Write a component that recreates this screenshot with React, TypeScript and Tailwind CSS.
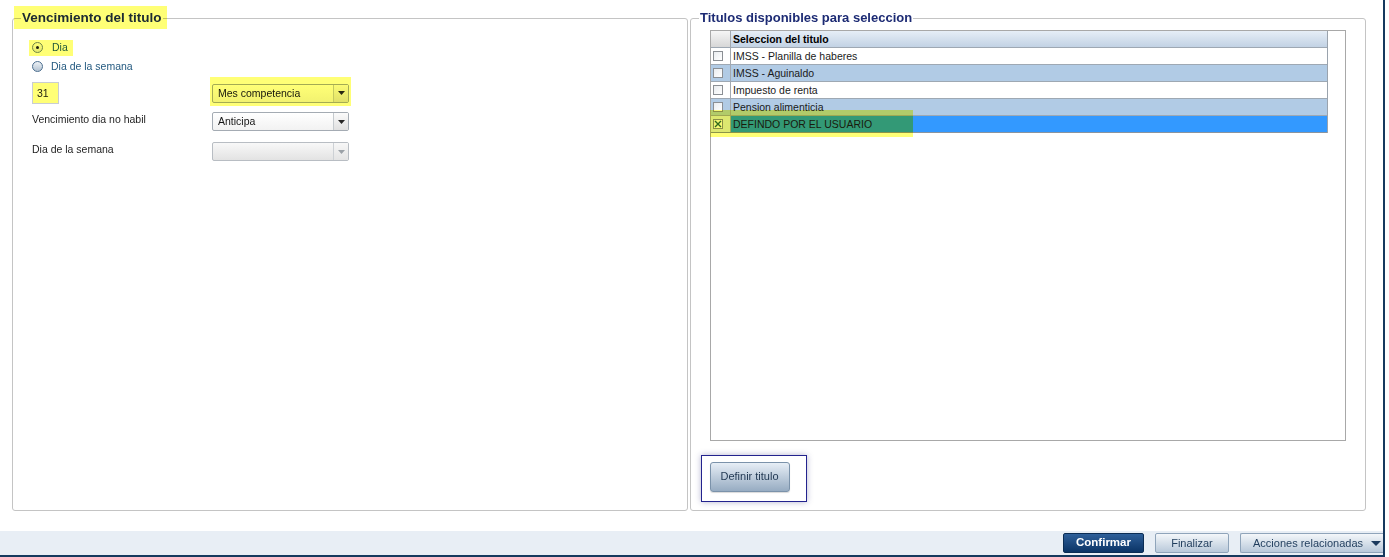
import clsx from "clsx";

// yellow marker used by the screenshot annotations
function Mark({ className }: { className?: string }) {
  return (
    <span
      className={clsx(
        "pointer-events-none absolute bg-[#ffff76] mix-blend-multiply",
        className
      )}
    />
  );
}

function Radio({ checked }: { checked?: boolean }) {
  if (checked) {
    return (
      <span className="flex h-[11px] w-[11px] shrink-0 items-center justify-center rounded-full border border-[#6f8597] bg-linear-to-b from-white to-[#e4e9ee]">
        <span className="h-[3px] w-[3px] rounded-full bg-[#1d1d1d]" />
      </span>
    );
  }
  return (
    <span className="h-[11px] w-[11px] shrink-0 rounded-full border border-[#4d6f8f] bg-linear-to-b from-[#eef2f6] to-[#b4c3d2]" />
  );
}

function Select({ value, disabled }: { value?: string; disabled?: boolean }) {
  return (
    <div
      className={clsx(
        "flex h-[19px] w-[137px] rounded-[2px] border",
        disabled
          ? "border-[#b8bdc3] bg-linear-to-b from-[#f8f8f8] to-[#e3e3e3]"
          : "border-[#a4abb3] bg-linear-to-b from-white to-[#f2f2f2]"
      )}
    >
      <div className="flex-1 pl-[5px] text-[10.5px] leading-[17px] text-[#151515]">
        {value}
      </div>
      <div
        className={clsx(
          "flex w-[15px] items-center justify-center border-l bg-linear-to-b",
          disabled
            ? "border-[#cdd1d5] from-[#f7f7f7] to-[#e4e4e4]"
            : "border-[#c5cace] from-[#fbfbfb] to-[#e0e0e0]"
        )}
      >
        <svg width="7" height="4" viewBox="0 0 7 4">
          <path d="M0 0h7L3.5 4z" fill={disabled ? "#9ba1a7" : "#262626"} />
        </svg>
      </div>
    </div>
  );
}

function Check({ checked }: { checked?: boolean }) {
  return (
    <span className="flex h-[10px] w-[10px] items-center justify-center border border-[#8b8f94] bg-linear-to-br from-[#e9ecef] to-white">
      {checked && (
        <svg width="8" height="8" viewBox="0 0 8 8">
          <path d="M1 1l6 6M7 1L1 7" stroke="#2f6b3a" strokeWidth="1.4" />
        </svg>
      )}
    </span>
  );
}

const rows = [
  { label: "IMSS - Planilla de haberes", tone: "white" },
  { label: "IMSS - Aguinaldo", tone: "blue" },
  { label: "Impuesto de renta", tone: "white" },
  { label: "Pension alimenticia", tone: "blue" },
  { label: "DEFINDO POR EL USUARIO", tone: "sel", checked: true },
];

export default function App() {
  return (
    <div className="flex h-[557px] w-[1385px] flex-col border-r-2 border-b-2 border-[#15395e] bg-white font-['Liberation_Sans',Arial,sans-serif] text-[#1b1b1b]">
      <div className="flex flex-1 gap-[2px] pt-[10px] pl-[12px]">
        {/* Vencimiento del titulo */}
        <fieldset className="h-[501px] w-[676px] rounded-[3px] border border-[#c4c4c4]">
          <legend className="relative ml-[8px] px-[1px] text-[13.5px] leading-[16px] font-bold text-[#1d2b6c]">
            Vencimiento del titulo
            <Mark className="-top-[4px] -right-[4px] -bottom-[3px] -left-[7px]" />
          </legend>
          <div className="pt-[12px] pl-[19px] text-[10.5px]">
            <div className="flex h-[19px] items-center">
              <span className="relative flex items-center">
                <Mark className="top-0 -left-[3px] h-[16px] w-[44px]" />
                <Radio checked />
                <span className="ml-[9px] leading-[15px] text-[#245a80]">Dia</span>
              </span>
            </div>
            <div className="flex h-[19px] items-center">
              <Radio />
              <span className="ml-[8px] leading-[15px] text-[#245a80]">
                Dia de la semana
              </span>
            </div>

            <div className="mt-[6px] flex h-[22px] items-center">
              <div className="w-[180px]">
                <div className="relative h-[22px] w-[27px] border border-[#c9cdd2] pl-[4px] leading-[20px] text-[#222]">
                  31
                  <Mark className="inset-0" />
                </div>
              </div>
              <div className="relative">
                <Select value="Mes competencia" />
                <Mark className="-top-[7px] -right-[2px] -bottom-[3px] -left-[2px]" />
              </div>
            </div>

            <div className="mt-[8px] flex h-[19px]">
              <div className="w-[180px] self-start leading-[14px] text-[#1e1e1e]">
                Vencimiento dia no habil
              </div>
              <Select value="Anticipa" />
            </div>

            <div className="mt-[11px] flex h-[19px]">
              <div className="w-[180px] self-start leading-[14px] text-[#1e1e1e]">
                Dia de la semana
              </div>
              <Select disabled />
            </div>
          </div>
        </fieldset>

        {/* Titulos disponibles para seleccion */}
        <fieldset className="h-[501px] w-[676px] rounded-[3px] border border-[#c4c4c4]">
          <legend className="ml-[8px] px-[1px] text-[13px] leading-[16px] font-bold text-[#1d2b74]">
            Titulos disponibles para seleccion
          </legend>
          <div className="pt-[4px] pl-[19px]">
            <div className="relative h-[411px] w-[636px] border border-[#a8a8a8] bg-white">
              <div className="w-[617px] border-r border-[#9aa3ad] text-[10.5px]">
                <div className="flex h-[17px] border-b border-[#9ea8b3]">
                  <div className="w-[20px] border-r border-[#a3a9b0] bg-linear-to-b from-[#f6f6f6] to-[#d7d7d7]" />
                  <div className="flex-1 bg-linear-to-b from-[#e6eef7] to-[#c2d2e4] pl-[2px] leading-[16px] font-bold text-black">
                    Seleccion del titulo
                  </div>
                </div>
                {rows.map((r) => (
                  <div
                    key={r.label}
                    className={clsx(
                      "flex h-[17px] border-b",
                      r.tone === "sel" ? "border-[#8a949e]" : "border-[#9ea8b3]",
                      r.tone === "blue" && "bg-[#b1cbe5]",
                      r.tone === "white" && "bg-white"
                    )}
                  >
                    <div
                      className={clsx(
                        "flex w-[20px] items-center border-r border-[#a3a9b0] pl-[2px]",
                        r.tone === "sel" && "bg-[#dce7f1]"
                      )}
                    >
                      <Check checked={r.checked} />
                    </div>
                    <div
                      className={clsx(
                        "flex-1 pl-[2px] leading-[16px] text-[#1a1a1a]",
                        r.tone === "sel" && "bg-[#3399ff]"
                      )}
                    >
                      {r.label}
                    </div>
                  </div>
                ))}
              </div>
              <Mark className="top-[79px] -left-[1px] h-[27px] w-[203px]" />
            </div>

            <div className="mt-[14px] -ml-[9px] h-[47px] w-[106px] border-[1.5px] border-[#23238e] pt-[5.5px] pl-[7.5px] shadow-[0_0_6px_rgba(40,40,120,0.35)]">
              <button className="h-[30px] w-[80px] rounded-[3px] border border-[#7b92aa] bg-linear-to-b from-[#e7eef6] to-[#97acc2] text-[11px] text-[#1f3650] shadow-[0_1px_1px_rgba(0,0,0,0.15)]">
                Definir titulo
              </button>
            </div>
          </div>
        </fieldset>
      </div>

      {/* footer actions */}
      <div className="flex h-[24px] items-center justify-end gap-[11px] bg-[#e8eef5]">
        <button className="h-[20px] w-[81px] rounded-[2px] border border-[#0b2d55] bg-linear-to-b from-[#2e609a] to-[#0b3466] text-[11.5px] font-bold text-white">
          Confirmar
        </button>
        <button className="h-[20px] w-[74px] rounded-[2px] border border-[#8fa4ba] bg-linear-to-b from-[#f4f7fa] to-[#b9c9da] text-[11px] text-[#1f3c5c]">
          Finalizar
        </button>
        <button className="flex h-[20px] w-[143px] items-center rounded-l-[2px] border border-r-0 border-[#8fa4ba] bg-linear-to-b from-[#f4f7fa] to-[#b9c9da] pl-[12px] text-[11px] text-[#1f3c5c]">
          <span className="flex-1 text-left">Acciones relacionadas</span>
          <svg width="10" height="5" viewBox="0 0 10 5" className="mr-[2px]">
            <path d="M0 0h10L5 5z" fill="#1c3a5e" />
          </svg>
        </button>
      </div>
    </div>
  );
}
